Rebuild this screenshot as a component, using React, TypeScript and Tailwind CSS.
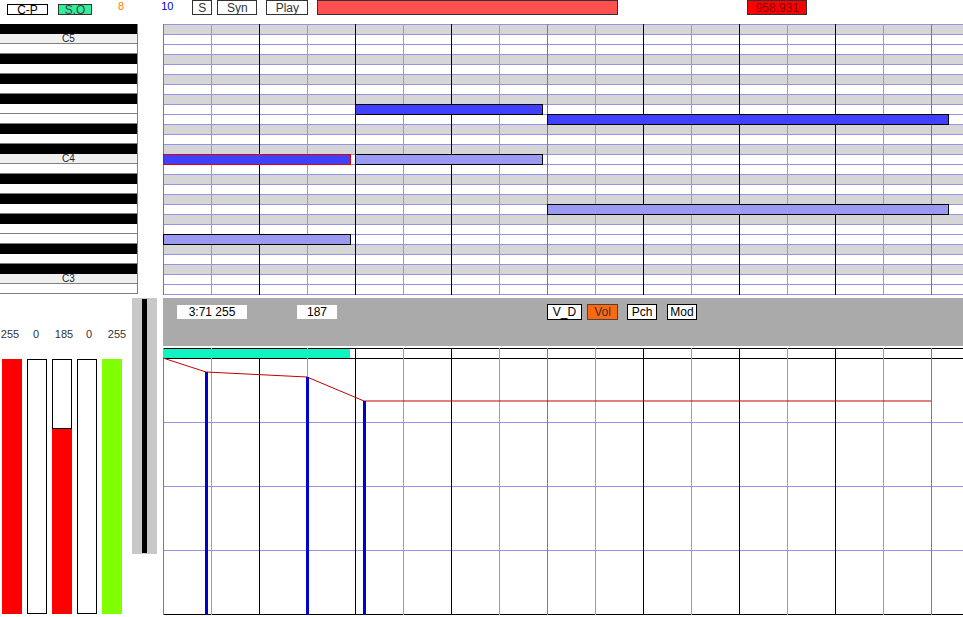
import React from "react";

const ROWS = 27;
const BLACK_ROWS = [0, 3, 5, 7, 10, 12, 15, 17, 19, 22, 24];
const C_LABELS: Record<number, string> = { 1: "C5", 13: "C4", 25: "C3" };

const LAV = "#9494e8";
const MAG = "#d040d0";

type Note = { row: number; x: number; w: number; dark: boolean; sel?: boolean };

const notes: Note[] = [
  { row: 8, x: 192, w: 187, dark: true },
  { row: 9, x: 384, w: 401, dark: true },
  { row: 13, x: 0, w: 187, dark: true, sel: true },
  { row: 13, x: 192, w: 187, dark: false },
  { row: 18, x: 384, w: 401, dark: false },
  { row: 21, x: 0, w: 187, dark: false },
];

// label offsets are a bit uneven in the original, keep them as-is
const sliders = [
  { label: "255", value: 255, color: "bg-[#ff0000]", ml: "ml-0" },
  { label: "0", value: 0, color: "bg-[#ff0000]", ml: "ml-[6px]" },
  { label: "185", value: 185, color: "bg-[#ff0000]", ml: "ml-[8px]" },
  { label: "0", value: 0, color: "bg-[#80ff00]", ml: "ml-[5px]" },
  { label: "255", value: 255, color: "bg-[#80ff00]", ml: "ml-[8px]" },
];

function lineColor(k: number) {
  if (k % 8 === 0) return MAG;
  if (k % 2 === 0) return "#000000";
  return LAV;
}

const cols = Array.from({ length: 17 }, (_, k) => k);

function NoteGrid() {
  return (
    <svg width={800} height={271} className="block">
      {Array.from({ length: ROWS }, (_, r) => (
        <rect key={r} x={0} y={r * 10} width={800} height={10} fill={BLACK_ROWS.includes(r) ? "#d6d6d6" : "#ffffff"} />
      ))}
      {Array.from({ length: ROWS + 1 }, (_, r) => (
        <line key={r} x1={0} x2={800} y1={r * 10 + 0.5} y2={r * 10 + 0.5} stroke={LAV} />
      ))}
      {cols.map(k => (
        <line key={k} x1={k * 48 + 0.5} x2={k * 48 + 0.5} y1={0} y2={271} stroke={lineColor(k)} />
      ))}
      {notes.map((n, i) => (
        <rect
          key={i}
          x={n.x + 0.5}
          y={n.row * 10 + 0.5}
          width={n.w}
          height={10}
          fill={n.dark ? "#4040ff" : "#9a9af2"}
          stroke={n.sel ? "#e00000" : "#000000"}
        />
      ))}
    </svg>
  );
}

function AutomationGrid() {
  return (
    <svg width={800} height={267} className="block">
      {[0, 10, 266].map(y => (
        <line key={y} x1={0} x2={800} y1={y + 0.5} y2={y + 0.5} stroke="#000000" />
      ))}
      {[74, 138, 202].map(y => (
        <line key={y} x1={0} x2={800} y1={y + 0.5} y2={y + 0.5} stroke={LAV} />
      ))}
      {cols.map(k => (
        <line key={k} x1={k * 48 + 0.5} x2={k * 48 + 0.5} y1={0} y2={267} stroke={lineColor(k)} />
      ))}
      <rect x={0} y={1} width={187} height={9} fill="#10f4c2" />
      <polyline points="0,10 43,24 144,29 201,53 768,53" fill="none" stroke="#c00000" strokeWidth={1} />
      <rect x={42} y={24} width={3} height={243} fill="#0000d0" />
      <rect x={143} y={29} width={3} height={238} fill="#0000d0" />
      <rect x={200} y={53} width={3} height={214} fill="#0000d0" />
    </svg>
  );
}

export default function App() {
  return (
    <div className="w-[963px] h-[617px] bg-white overflow-hidden text-[12px] text-black font-['Liberation_Sans',Arial,sans-serif]">
      {/* top bar */}
      <div className="h-[24px] flex items-start leading-none">
        <div className="ml-[7px] mt-[4px] w-[41px] h-[11px] border border-black flex items-center justify-center">C-P</div>
        <div className="ml-[10px] mt-[4px] w-[34px] h-[11px] border border-[#333] bg-[#2ef09a] flex items-center justify-center text-[#444]">S.O</div>
        <div className="ml-[26px] mt-[1px] text-[11px] text-[#ff8000]">8</div>
        <div className="ml-[37px] mt-[1px] text-[11px] text-[#0000c0]">10</div>
        <div className="ml-[19px] w-[20px] h-[15px] border border-[#333] flex items-center justify-center text-[#333]">S</div>
        <div className="ml-[5px] w-[40px] h-[15px] border border-[#333] flex items-center justify-center text-[#333]">Syn</div>
        <div className="ml-[9px] w-[42px] h-[15px] border border-[#333] flex items-center justify-center text-[#333]">Play</div>
        <div className="ml-[9px] w-[301px] h-[15px] border border-[#333] bg-[#ff5050]" />
        <div className="ml-[129px] w-[60px] h-[15px] border border-[#333] bg-[#ff0000] flex items-center justify-center text-[#800000]">958,931</div>
      </div>

      <div className="flex">
        {/* piano keys + sliders */}
        <div className="w-[163px] shrink-0">
          <div className="w-[138px] border-r border-[#808080] flex flex-col">
            {Array.from({ length: ROWS }, (_, r) =>
              BLACK_ROWS.includes(r) ? (
                <div key={r} className="h-[10px] bg-black" />
              ) : (
                <div
                  key={r}
                  className={`h-[10px] border-b border-[#808080] flex items-center justify-center text-[10px] leading-none text-[#222] ${C_LABELS[r] ? "bg-[#f0f0f0]" : "bg-white"}`}
                >
                  {C_LABELS[r] ?? ""}
                </div>
              )
            )}
          </div>

          <div className="mt-[4px] flex">
            <div className="w-[132px] pt-[29px]">
              <div className="flex h-[14px] text-[11px] leading-none text-[#333]">
                {sliders.map((s, i) => (
                  <div key={i} className={`${s.ml} w-[20px] flex items-center justify-center`}>{s.label}</div>
                ))}
              </div>
              <div className="mt-[18px] pl-[2px] flex gap-[5px]">
                {sliders.map((s, i) => (
                  <div key={i} className="w-[20px] h-[255px] flex flex-col">
                    {s.value < 255 && <div className="flex-1 border border-black bg-white" />}
                    {s.value > 0 && <div className={s.color} style={{ height: s.value }} />}
                  </div>
                ))}
              </div>
            </div>
            <div className="w-[25px] h-[256px] bg-[#c8c8c8] flex justify-center pt-[1px]">
              <div className="w-[5px] h-[254px] bg-black" />
            </div>
          </div>
        </div>

        {/* note grid + automation */}
        <div className="w-[800px] shrink-0">
          <NoteGrid />
          <div className="mt-[3px] h-[48px] bg-[#aaaaaa] flex items-start leading-none">
            <div className="ml-[14px] mt-[7px] w-[70px] h-[14px] bg-white flex items-center justify-center">3:71 255</div>
            <div className="ml-[50px] mt-[7px] w-[40px] h-[14px] bg-white flex items-center justify-center">187</div>
            <div className="ml-[210px] mt-[6px] w-[35px] h-[16px] bg-white border border-black flex items-center justify-center">V_D</div>
            <div className="ml-[5px] mt-[6px] w-[31px] h-[16px] bg-[#ff6a10] border border-[#444] flex items-center justify-center text-[#333]">Vol</div>
            <div className="ml-[9px] mt-[6px] w-[30px] h-[16px] bg-white border border-black flex items-center justify-center">Pch</div>
            <div className="ml-[10px] mt-[6px] w-[30px] h-[16px] bg-white border border-black flex items-center justify-center">Mod</div>
          </div>
          <div className="mt-[2px]">
            <AutomationGrid />
          </div>
        </div>
      </div>
    </div>
  );
}
